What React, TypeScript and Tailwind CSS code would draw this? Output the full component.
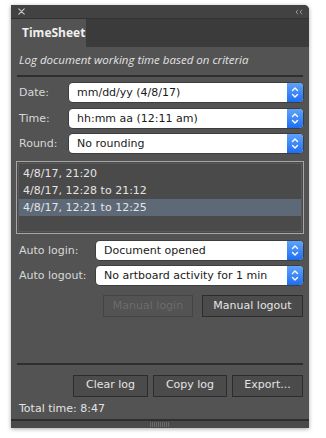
import React from 'react';

const font = { fontFamily: '"DejaVu Sans", "Liberation Sans", sans-serif' };
const myriad = { fontFamily: '"Open Sans", "Liberation Sans", sans-serif' };

function Stepper() {
  return (
    <div className="flex h-full w-[16px] flex-col items-center justify-center rounded-r-[4px] bg-gradient-to-b from-[#5fa2f8] to-[#1c6ef2]">
      <svg width="8" height="13" viewBox="0 0 8 13" fill="none" stroke="#fff" strokeWidth="1.4" strokeLinecap="round" strokeLinejoin="round">
        <path d="M1.5 4.5 L4 2 L6.5 4.5" />
        <path d="M1.5 8.5 L4 11 L6.5 8.5" />
      </svg>
    </div>
  );
}

function Select({ value, className }: { value: string; className?: string }) {
  return (
    <div className={`flex h-[19px] items-stretch rounded-[4px] bg-white shadow-[0_0_0_0.5px_#2a2a2a] ${className ?? ''}`}>
      <div className="flex flex-1 items-center pl-[8px] text-[11px] text-[#1a1a1a]">{value}</div>
      <Stepper />
    </div>
  );
}

function Row({ label, value, labelW, top }: { label: string; value: string; labelW: string; top: string }) {
  return (
    <div className={`flex items-center ${top}`}>
      <div className={`${labelW} text-[11px] text-[#d8d8d8]`}>{label}</div>
      <Select value={value} className="flex-1" />
    </div>
  );
}

function Btn({ children, disabled, className }: { children: React.ReactNode; disabled?: boolean; className?: string }) {
  return (
    <button
      type="button"
      className={`flex h-[22px] items-center justify-center border text-[11px] ${
        disabled ? 'border-[#444] bg-[#535353] text-[#6c6c6c]' : 'border-[#2c2c2c] bg-[#4b4b4b] text-[#e4e4e4]'
      } ${className ?? ''}`}
    >
      {children}
    </button>
  );
}

export default function App() {
  const entries = ['4/8/17, 21:20', '4/8/17, 12:28 to 21:12', '4/8/17, 12:21 to 12:25'];
  return (
    <div className="h-[438px] w-[326px] bg-white pl-[11px] pt-[5px]" style={font}>
      <div className="flex h-[423px] w-[298px] flex-col overflow-hidden rounded-tr-[5px] bg-[#535353] shadow-[0_1px_4px_rgba(0,0,0,0.35)]">
        {/* title bar */}
        <div className="flex h-[14px] items-center justify-between border-b border-[#323232] bg-[#424242] pl-[7px] pr-[6px]">
          <svg width="7" height="7" viewBox="0 0 7 7" stroke="#c4c4c4" strokeWidth="1.2" strokeLinecap="round">
            <path d="M0.8 0.8 L6.2 6.2 M6.2 0.8 L0.8 6.2" />
          </svg>
          <svg width="8" height="6" viewBox="0 0 8 6" fill="none" stroke="#9a9a9a" strokeWidth="1">
            <path d="M3 0.8 L1 3 L3 5.2 M7 0.8 L5 3 L7 5.2" />
          </svg>
        </div>
        {/* tabs */}
        <div className="flex h-[28px] bg-[#3b3b3b]">
          <div className="flex w-[75px] items-center bg-[#535353] pl-[11px] text-[12px] font-bold text-[#f0f0f0]" style={myriad}>
            TimeSheet
          </div>
        </div>
        {/* body */}
        <div className="flex flex-1 flex-col px-[6px]">
          <div className="mt-[4px] pl-[2px] text-[11.5px] italic text-[#e2e2e2]" style={myriad}>
            Log document working time based on criteria
          </div>
          <div className="mt-[7px] h-[2px] bg-[#2e2e2e]" />

          <div className="pl-[2px]">
            <Row label="Date:" value="mm/dd/yy (4/8/17)" labelW="w-[50px]" top="mt-[6px]" />
            <Row label="Time:" value="hh:mm aa (12:11 am)" labelW="w-[50px]" top="mt-[7px]" />
            <Row label="Round:" value="No rounding" labelW="w-[50px]" top="mt-[6px]" />
          </div>

          <div className="mt-[8px] ml-[-1px] mr-[-1px] h-[73px] border border-[#a6a6a6] bg-[#4a4a4a] p-[1px]">
            <div className="h-full border border-[#5a5a5a] pt-[1px]">
              {entries.map((e, i) => (
                <div
                  key={e}
                  className={`flex h-[17px] items-center pl-[4px] text-[11px] text-[#e4e4e4] ${i === 2 ? 'bg-[#5e6978]' : ''}`}
                >
                  {e}
                </div>
              ))}
            </div>
          </div>

          <div className="pl-[2px]">
            <Row label="Auto login:" value="Document opened" labelW="w-[77px]" top="mt-[7px]" />
            <Row label="Auto logout:" value="No artboard activity for 1 min" labelW="w-[77px]" top="mt-[6px]" />
          </div>

          <div className="mt-[10px] flex justify-end gap-[9px]">
            <Btn disabled className="w-[90px]">Manual login</Btn>
            <Btn className="w-[101px]">Manual logout</Btn>
          </div>

          <div className="flex-1" />
          <div className="h-[2px] bg-[#2e2e2e]" />
          <div className="mt-[10px] flex justify-end gap-[5px]">
            <Btn className="w-[75px]">Clear log</Btn>
            <Btn className="w-[74px]">Copy log</Btn>
            <Btn className="w-[71px]">Export...</Btn>
          </div>
          <div className="mt-[4px] mb-[2px] pl-[2px] text-[11px] text-[#e2e2e2]">Total time: 8:47</div>
        </div>
        {/* bottom grip */}
        <div className="flex h-[9px] justify-center border-t-2 border-[#2e2e2e] bg-[#4a4a4a]">
          <div className="mt-[1px] h-[5px] w-[20px] bg-[repeating-linear-gradient(90deg,#6a6a6a_0_1px,transparent_1px_2px)]" />
        </div>
      </div>
    </div>
  );
}
